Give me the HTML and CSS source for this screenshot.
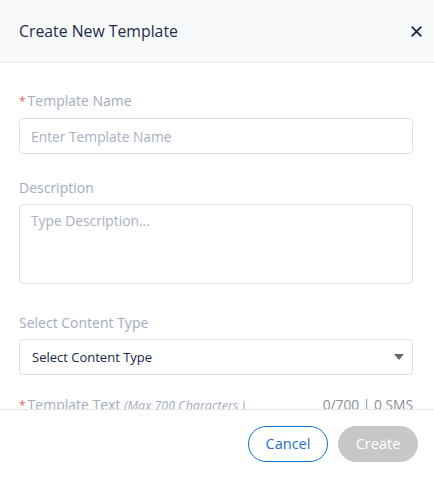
FILE: index.html
```html
<!DOCTYPE html>
<html lang="en">
<head>
<meta charset="utf-8">
<title>Create New Template</title>
<link rel="stylesheet" href="styles.css">
</head>
<body>
<div class="modal">
  <header class="modal-header">
    <h2 class="modal-title">Create New Template</h2>
    <button class="close-btn" aria-label="Close">
      <svg width="11" height="11" viewBox="0 0 11 11"><path d="M1.2 1.2 L9.8 9.8 M9.8 1.2 L1.2 9.8" stroke="#1b2a4e" stroke-width="1.9" stroke-linecap="round"/></svg>
    </button>
  </header>
  <div class="modal-body">
    <div class="field field-name">
      <label class="label"><span class="req">*</span>Template Name</label>
      <div class="input"><span class="placeholder">Enter Template Name</span></div>
    </div>
    <div class="field field-desc">
      <label class="label">Description</label>
      <div class="textarea"><span class="placeholder">Type Description...</span></div>
    </div>
    <div class="field field-type">
      <label class="label">Select Content Type</label>
      <div class="select"><span class="select-value">Select Content Type</span>
        <svg class="caret" width="10" height="6" viewBox="0 0 10 6"><path d="M0 0 H10 L5 6 Z" fill="#666"/></svg>
      </div>
    </div>
    <div class="field field-text">
      <div class="label-row">
        <label class="label"><span class="req">*</span>Template Text <span class="hint">(Max 700 Characters )</span></label>
        <span class="counter">0/700 | 0 SMS</span>
      </div>
    </div>
  </div>
  <footer class="modal-footer">
    <button class="btn btn-cancel">Cancel</button>
    <button class="btn btn-create">Create</button>
  </footer>
</div>
</body>
</html>
```
FILE: styles.css
```css
html, body {
  margin: 0;
  padding: 0;
  background: #ffffff;
}
body {
  font-family: "Open Sans", "Noto Sans", sans-serif;
  width: 434px;
  height: 477px;
  overflow: hidden;
}
.modal {
  display: flex;
  flex-direction: column;
  height: 477px;
}
.modal-header {
  height: 62px;
  flex: none;
  background: #f8f9fb;
  border-bottom: 1px solid #e4e7ec;
  display: flex;
  align-items: center;
  justify-content: space-between;
  padding: 0 8px 0 19px;
}
.modal-title {
  margin: 0;
  font-size: 15.8px;
  font-weight: 400;
  color: #1e2b4a;
}
.close-btn {
  border: 0;
  background: transparent;
  padding: 4px;
  display: flex;
  cursor: pointer;
}
.modal-body {
  flex: 1;
  overflow: hidden;
  padding: 28px 21px 0 19px;
}
.field {
  display: flex;
  flex-direction: column;
}
.label {
  font-size: 14px;
  line-height: 20px;
  color: #a3abbd;
  margin-bottom: 6px;
}
.req {
  color: #d0705f;
  margin-right: 2px;
  font-size: 12px;
}
.input, .textarea, .select {
  box-sizing: border-box;
  border: 1px solid #dcdfe5;
  border-radius: 4px;
  background: #fff;
}
.input {
  height: 36px;
  display: flex;
  align-items: center;
  padding: 0 11px;
}
.placeholder {
  font-size: 13.8px;
  color: #a8b0c2;
}
.field-desc { margin-top: 24px; }
.textarea {
  height: 80px;
  padding: 4px 11px;
}
.field-type { margin-top: 29px; }
.select {
  height: 36px;
  display: flex;
  align-items: center;
  justify-content: space-between;
  padding: 0 8px 0 12px;
}
.select-value {
  font-size: 13px;
  color: #16264a;
}
.field-text { margin-top: 20px; }
.label-row {
  display: flex;
  justify-content: space-between;
  align-items: baseline;
}
.hint {
  font-style: italic;
  font-size: 12.5px;
  color: #a3abbd;
}
.counter {
  font-size: 13.8px;
  color: #8a8f99;
}
.modal-footer {
  height: 67px;
  flex: none;
  border-top: 1px solid #e6e6e6;
  display: flex;
  align-items: center;
  justify-content: flex-end;
  gap: 10px;
  padding: 0 16px 0 0;
  background: #fff;
}
.btn {
  width: 80px;
  height: 36px;
  border-radius: 18px;
  font-family: inherit;
  font-size: 14.5px;
  box-sizing: border-box;
  cursor: pointer;
}
.btn-cancel {
  background: #fff;
  border: 1px solid #0a70d2;
  color: #1a6fd0;
}
.btn-create {
  background: #c9c7c5;
  border: 1px solid #c9c7c5;
  color: #ffffff;
}
```
